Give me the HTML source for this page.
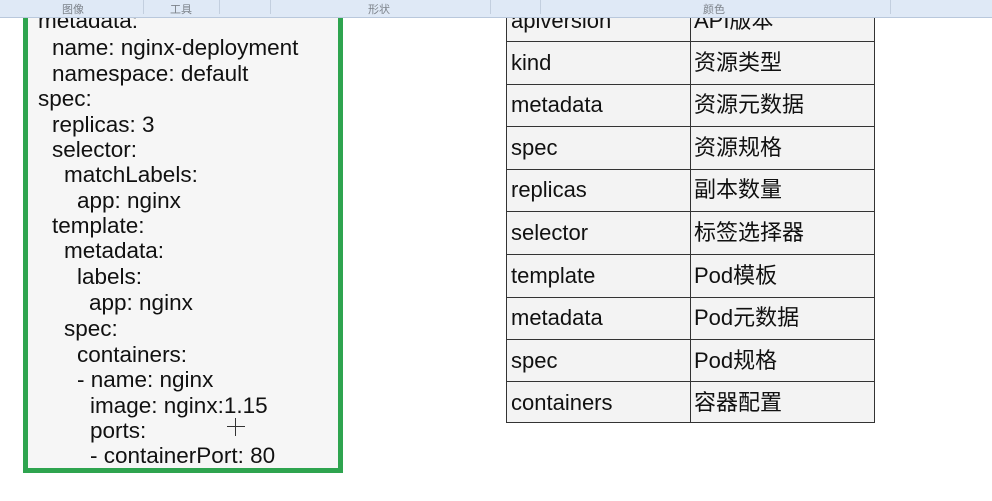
<!DOCTYPE html>
<html><head><meta charset="utf-8"><style>
*{margin:0;padding:0;box-sizing:border-box}
body{width:992px;height:501px;background:#fff;position:relative;overflow:hidden;font-family:"Liberation Sans","Noto Sans CJK SC",sans-serif;color:#111}
.rib{position:absolute;left:0;top:0;width:992px;height:18px;background:#dfe9f6;border-bottom:1px solid #b9c8dc;z-index:5}
.rib span{position:absolute;top:1px;font-size:11px;color:#7d838b}
.rib i{position:absolute;top:0;width:1px;height:14px;background:#c3cfdf}
.box{position:absolute;left:23px;top:-10px;width:320px;height:483px;border:5px solid #2ea44f;border-top:none;background:#f6f6f6}
.l{position:absolute;font-size:22.5px;line-height:24px;white-space:pre;color:#111}
.tbl{position:absolute;left:506px;top:-3px;width:369px;height:426px;background:#f3f3f3;border:1px solid #333}
.row{position:absolute;left:0;width:367px;height:1px;background:#333}
.col{position:absolute;left:183px;top:0;width:1px;height:424px;background:#333}
.c{position:absolute;font-size:22px;line-height:24px;white-space:nowrap}
</style></head><body>
<div class="rib">
<span style="left:62px">图像</span><i style="left:143px"></i><span style="left:170px">工具</span><i style="left:219px"></i><i style="left:270px"></i><span style="left:368px">形状</span><i style="left:490px"></i><i style="left:540px"></i><span style="left:703px">颜色</span><i style="left:890px"></i>
</div>
<div class="box"></div>
<div class="l" style="left:38px;top:9px">metadata:</div>
<div class="l" style="left:52px;top:36px">name: nginx-deployment</div>
<div class="l" style="left:52px;top:62px">namespace: default</div>
<div class="l" style="left:38px;top:87px">spec:</div>
<div class="l" style="left:52px;top:113px">replicas: 3</div>
<div class="l" style="left:52px;top:138px">selector:</div>
<div class="l" style="left:64px;top:163px">matchLabels:</div>
<div class="l" style="left:77px;top:189px">app: nginx</div>
<div class="l" style="left:52px;top:214px">template:</div>
<div class="l" style="left:64px;top:239px">metadata:</div>
<div class="l" style="left:77px;top:265px">labels:</div>
<div class="l" style="left:89px;top:291px">app: nginx</div>
<div class="l" style="left:64px;top:317px">spec:</div>
<div class="l" style="left:77px;top:343px">containers:</div>
<div class="l" style="left:77px;top:368px">- name: nginx</div>
<div class="l" style="left:90px;top:394px">image: nginx:1.15</div>
<div class="l" style="left:90px;top:419px">ports:</div>
<div class="l" style="left:90px;top:444px">- containerPort: 80</div>
<div style="position:absolute;left:235px;top:418px;width:1px;height:18px;background:#333"></div>
<div style="position:absolute;left:227px;top:426px;width:18px;height:1px;background:#333"></div>
<div class="tbl">
<div class="col"></div>
<div class="row" style="top:43px"></div><div class="row" style="top:86px"></div><div class="row" style="top:128px"></div><div class="row" style="top:171px"></div><div class="row" style="top:213px"></div><div class="row" style="top:256px"></div><div class="row" style="top:299px"></div><div class="row" style="top:341px"></div><div class="row" style="top:383px"></div>
</div>
<div class="c" style="left:511px;top:9px">apiversion</div><div class="c" style="left:694px;top:9px">API版本</div>
<div class="c" style="left:511px;top:51px">kind</div><div class="c" style="left:694px;top:51px">资源类型</div>
<div class="c" style="left:511px;top:93px">metadata</div><div class="c" style="left:694px;top:93px">资源元数据</div>
<div class="c" style="left:511px;top:136px">spec</div><div class="c" style="left:694px;top:136px">资源规格</div>
<div class="c" style="left:511px;top:178px">replicas</div><div class="c" style="left:694px;top:178px">副本数量</div>
<div class="c" style="left:511px;top:221px">selector</div><div class="c" style="left:694px;top:221px">标签选择器</div>
<div class="c" style="left:511px;top:264px">template</div><div class="c" style="left:694px;top:264px">Pod模板</div>
<div class="c" style="left:511px;top:306px">metadata</div><div class="c" style="left:694px;top:306px">Pod元数据</div>
<div class="c" style="left:511px;top:349px">spec</div><div class="c" style="left:694px;top:349px">Pod规格</div>
<div class="c" style="left:511px;top:391px">containers</div><div class="c" style="left:694px;top:391px">容器配置</div>
</body></html>
